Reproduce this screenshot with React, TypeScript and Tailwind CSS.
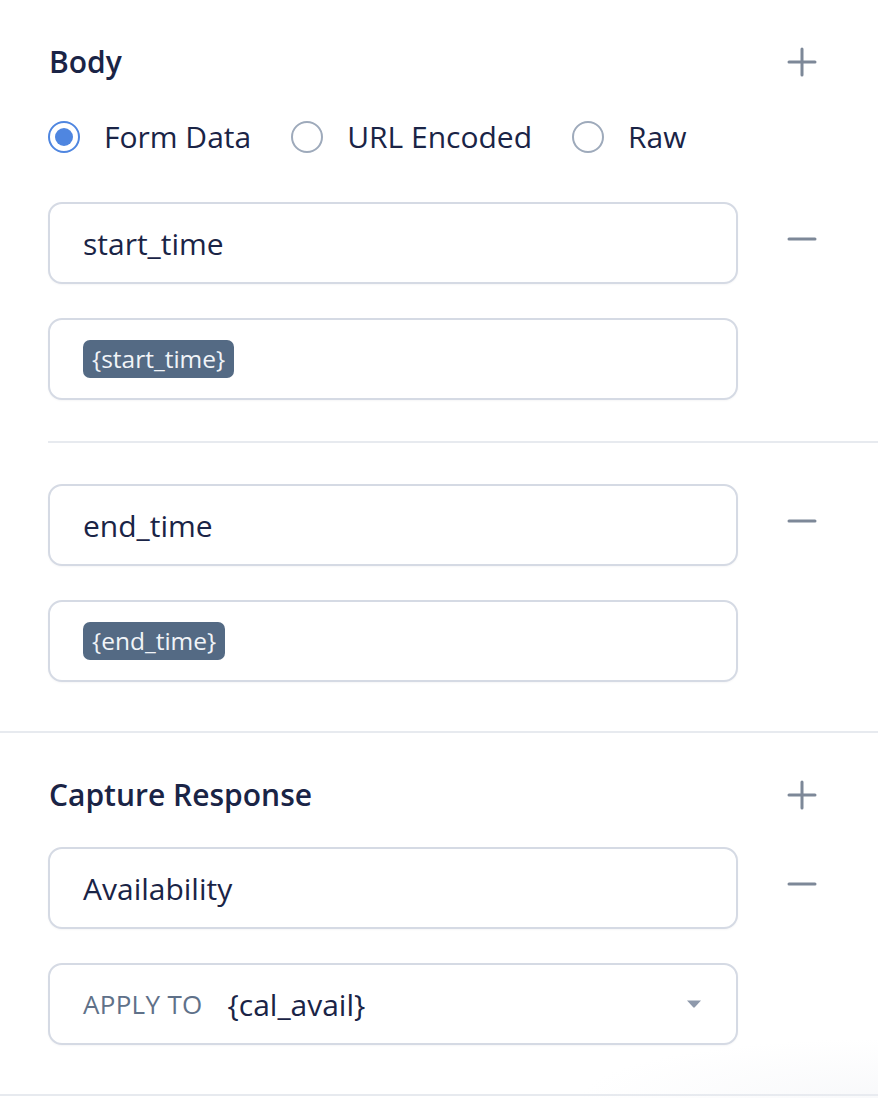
import React from "react";

const font = { fontFamily: '"Open Sans", "Noto Sans", sans-serif' };

function Plus() {
  return (
    <svg width="30" height="30" viewBox="0 0 30 30" className="block">
      <path d="M15 2v26M2 15h26" stroke="#7d8898" strokeWidth="3" strokeLinecap="round" />
    </svg>
  );
}

function Minus() {
  return (
    <svg width="30" height="6" viewBox="0 0 30 6" className="block">
      <path d="M2 3h26" stroke="#7d8898" strokeWidth="3" strokeLinecap="round" />
    </svg>
  );
}

function Radio({ checked, label }: { checked?: boolean; label: string }) {
  return (
    <div className="flex items-center gap-[24px]">
      <div
        className={
          checked
            ? "w-8 h-8 rounded-full border-2 border-[#4f86e0] flex items-center justify-center"
            : "w-8 h-8 rounded-full border-2 border-[#9eaabb]"
        }
      >
        {checked && <div className="w-[18px] h-[18px] rounded-full bg-[#4f86e0]" />}
      </div>
      <span className="text-[30px] text-[#1a2446] leading-none">{label}</span>
    </div>
  );
}

function Box({ children }: { children: React.ReactNode }) {
  return (
    <div className="w-[690px] h-[82px] rounded-[14px] border-2 border-[#d5dae4] bg-white flex items-center pl-[33px] pr-[30px] shadow-[0_1px_2px_rgba(20,30,60,0.04)]">
      {children}
    </div>
  );
}

function Chip({ text }: { text: string }) {
  return (
    <span className="inline-flex items-center h-[38px] px-[9px] rounded-[7px] bg-[#546a84] text-[#f1f4f8] text-[24.5px] leading-none">
      {text}
    </span>
  );
}

function Pair({ name, value }: { name: string; value: string }) {
  return (
    <div className="flex">
      <div className="flex flex-col gap-[34px]">
        <Box>
          <span className="text-[30px] text-[#1a2446]">{name}</span>
        </Box>
        <Box>
          <Chip text={value} />
        </Box>
      </div>
      <div className="ml-[49px] pt-[34px]">
        <Minus />
      </div>
    </div>
  );
}

export default function App() {
  return (
    <div className="w-[878px] h-[1098px] bg-white overflow-hidden relative" style={font}>
      <div className="pl-[48px] pt-[42px]">
        <div className="flex items-center h-[40px]">
          <h2 className="w-[739px] text-[30px] font-semibold text-[#1a2446] leading-none pl-px">Body</h2>
          <Plus />
        </div>
        <div className="flex items-center gap-[40px] mt-[35px] h-[40px]">
          <Radio checked label="Form Data" />
          <Radio label="URL Encoded" />
          <Radio label="Raw" />
        </div>
        <div className="mt-[45px]">
          <Pair name="start_time" value="{start_time}" />
        </div>
        <div className="mt-[41px] h-[2px] bg-[#e7eaef]" />
        <div className="mt-[41px]">
          <Pair name="end_time" value="{end_time}" />
        </div>
      </div>
      <div className="mt-[49px] h-[2px] bg-[#e7eaef]" />
      <div className="pl-[48px] pt-[42px]">
        <div className="flex items-center h-[40px]">
          <h2 className="w-[739px] text-[30px] font-semibold text-[#1a2446] leading-none pl-px">Capture Response</h2>
          <Plus />
        </div>
        <div className="mt-[32px] flex">
          <div className="flex flex-col gap-[34px]">
            <Box>
              <span className="text-[30px] text-[#1a2446]">Availability</span>
            </Box>
            <Box>
              <span className="text-[26px] font-medium text-[#5f7189] tracking-[0.3px]">APPLY TO</span>
              <span className="ml-[25px] text-[30px] text-[#1a2446]">{"{cal_avail}"}</span>
              <svg width="16" height="10" viewBox="0 0 16 10" className="ml-auto mr-[4px]">
                <path d="M1 1.5h14L8.8 8.3a1.1 1.1 0 0 1-1.6 0Z" fill="#8e99ab" />
              </svg>
            </Box>
          </div>
          <div className="ml-[49px] pt-[34px]">
            <Minus />
          </div>
        </div>
      </div>
      <div className="mt-[49px] h-[2px] bg-[#e7eaef]" />
      <div className="absolute right-0 bottom-0 w-[300px] h-[60px] bg-[radial-gradient(ellipse_at_bottom_right,rgba(235,237,242,0.35),rgba(255,255,255,0)_70%)] pointer-events-none" />
    </div>
  );
}
